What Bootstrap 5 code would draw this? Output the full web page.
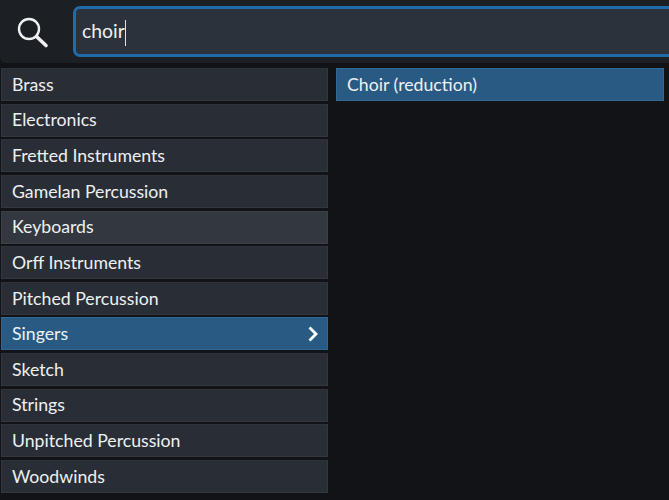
<!DOCTYPE html>
<html lang="en">
<head>
  <meta charset="UTF-8">
  <title>Instrument Search</title>
  <link href="https://cdn.jsdelivr.net/npm/bootstrap@5.3.0/dist/css/bootstrap.min.css" rel="stylesheet">
  <style>
    html, body { height: 100%; }
    body { background: #111316; color: #eef0f1; font-family: "Lato", "Noto Sans", sans-serif; font-size: 17.7px; overflow: hidden; }
    .search-bar { height: 63px; background: #1c2025; border-bottom-left-radius: 6px; padding-top: 6px; }
    .search-icon { width: 73px; padding: 11px 0 0 17px; }
    .search-box { height: 51px; width: calc(100% + 8px); background: #2b323b; border: 3px solid #1f6cab; border-radius: 7px 0 0 7px; padding-left: 6px; line-height: 44px; font-size: 19.4px; color: #eef0f1; }
    .caret-mark { display: inline-block; width: 1px; height: 26px; background: #dfe3e6; vertical-align: middle; }
    .lists { padding: 5px 0 0 1px; gap: 8px; }
    .pick-col { width: 327px; display: flex; flex-direction: column; gap: 2.64px; }
    .pick-col.wide-col { width: 328px; }
    .pick-row { height: 33px; line-height: 32px; padding: 0.5px 10px 0; background: #292e36; border: 1px solid #33383f; border-top-color: #2e333b; color: #eef0f1; display: flex; justify-content: space-between; align-items: center; }
    .pick-row.hovered { background: #33373f; border-color: #3c4047; }
    .pick-row.chosen { background: #285a84; border-color: #2f6997; }
    .chev { margin-right: -1px; }
  </style>
</head>
<body>
  <div class="search-bar d-flex align-items-start overflow-hidden">
    <div class="search-icon">
      <svg class="d-block" width="32" height="32" viewBox="0 0 32 32" fill="none" stroke="#eef0f1" stroke-linecap="round">
        <circle cx="12" cy="12" r="10" stroke-width="2.4"/>
        <path d="M20 20 L29 28.5" stroke-width="3.6"/>
      </svg>
    </div>
    <div class="flex-grow-1">
      <div class="search-box">choir<span class="caret-mark"></span></div>
    </div>
  </div>
  <div class="lists d-flex">
    <div class="pick-col">
      <div class="pick-row">Brass</div>
      <div class="pick-row">Electronics</div>
      <div class="pick-row">Fretted Instruments</div>
      <div class="pick-row">Gamelan Percussion</div>
      <div class="pick-row hovered">Keyboards</div>
      <div class="pick-row">Orff Instruments</div>
      <div class="pick-row">Pitched Percussion</div>
      <div class="pick-row chosen">Singers
        <svg class="chev" width="10" height="16" viewBox="0 0 10 16" fill="none" stroke="#fff" stroke-width="2.8"><path d="M1.5 1.5 L8 8 L1.5 14.5"/></svg>
      </div>
      <div class="pick-row">Sketch</div>
      <div class="pick-row">Strings</div>
      <div class="pick-row">Unpitched Percussion</div>
      <div class="pick-row">Woodwinds</div>
    </div>
    <div class="pick-col wide-col">
      <div class="pick-row chosen">Choir (reduction)</div>
    </div>
  </div>
</body>
</html>
